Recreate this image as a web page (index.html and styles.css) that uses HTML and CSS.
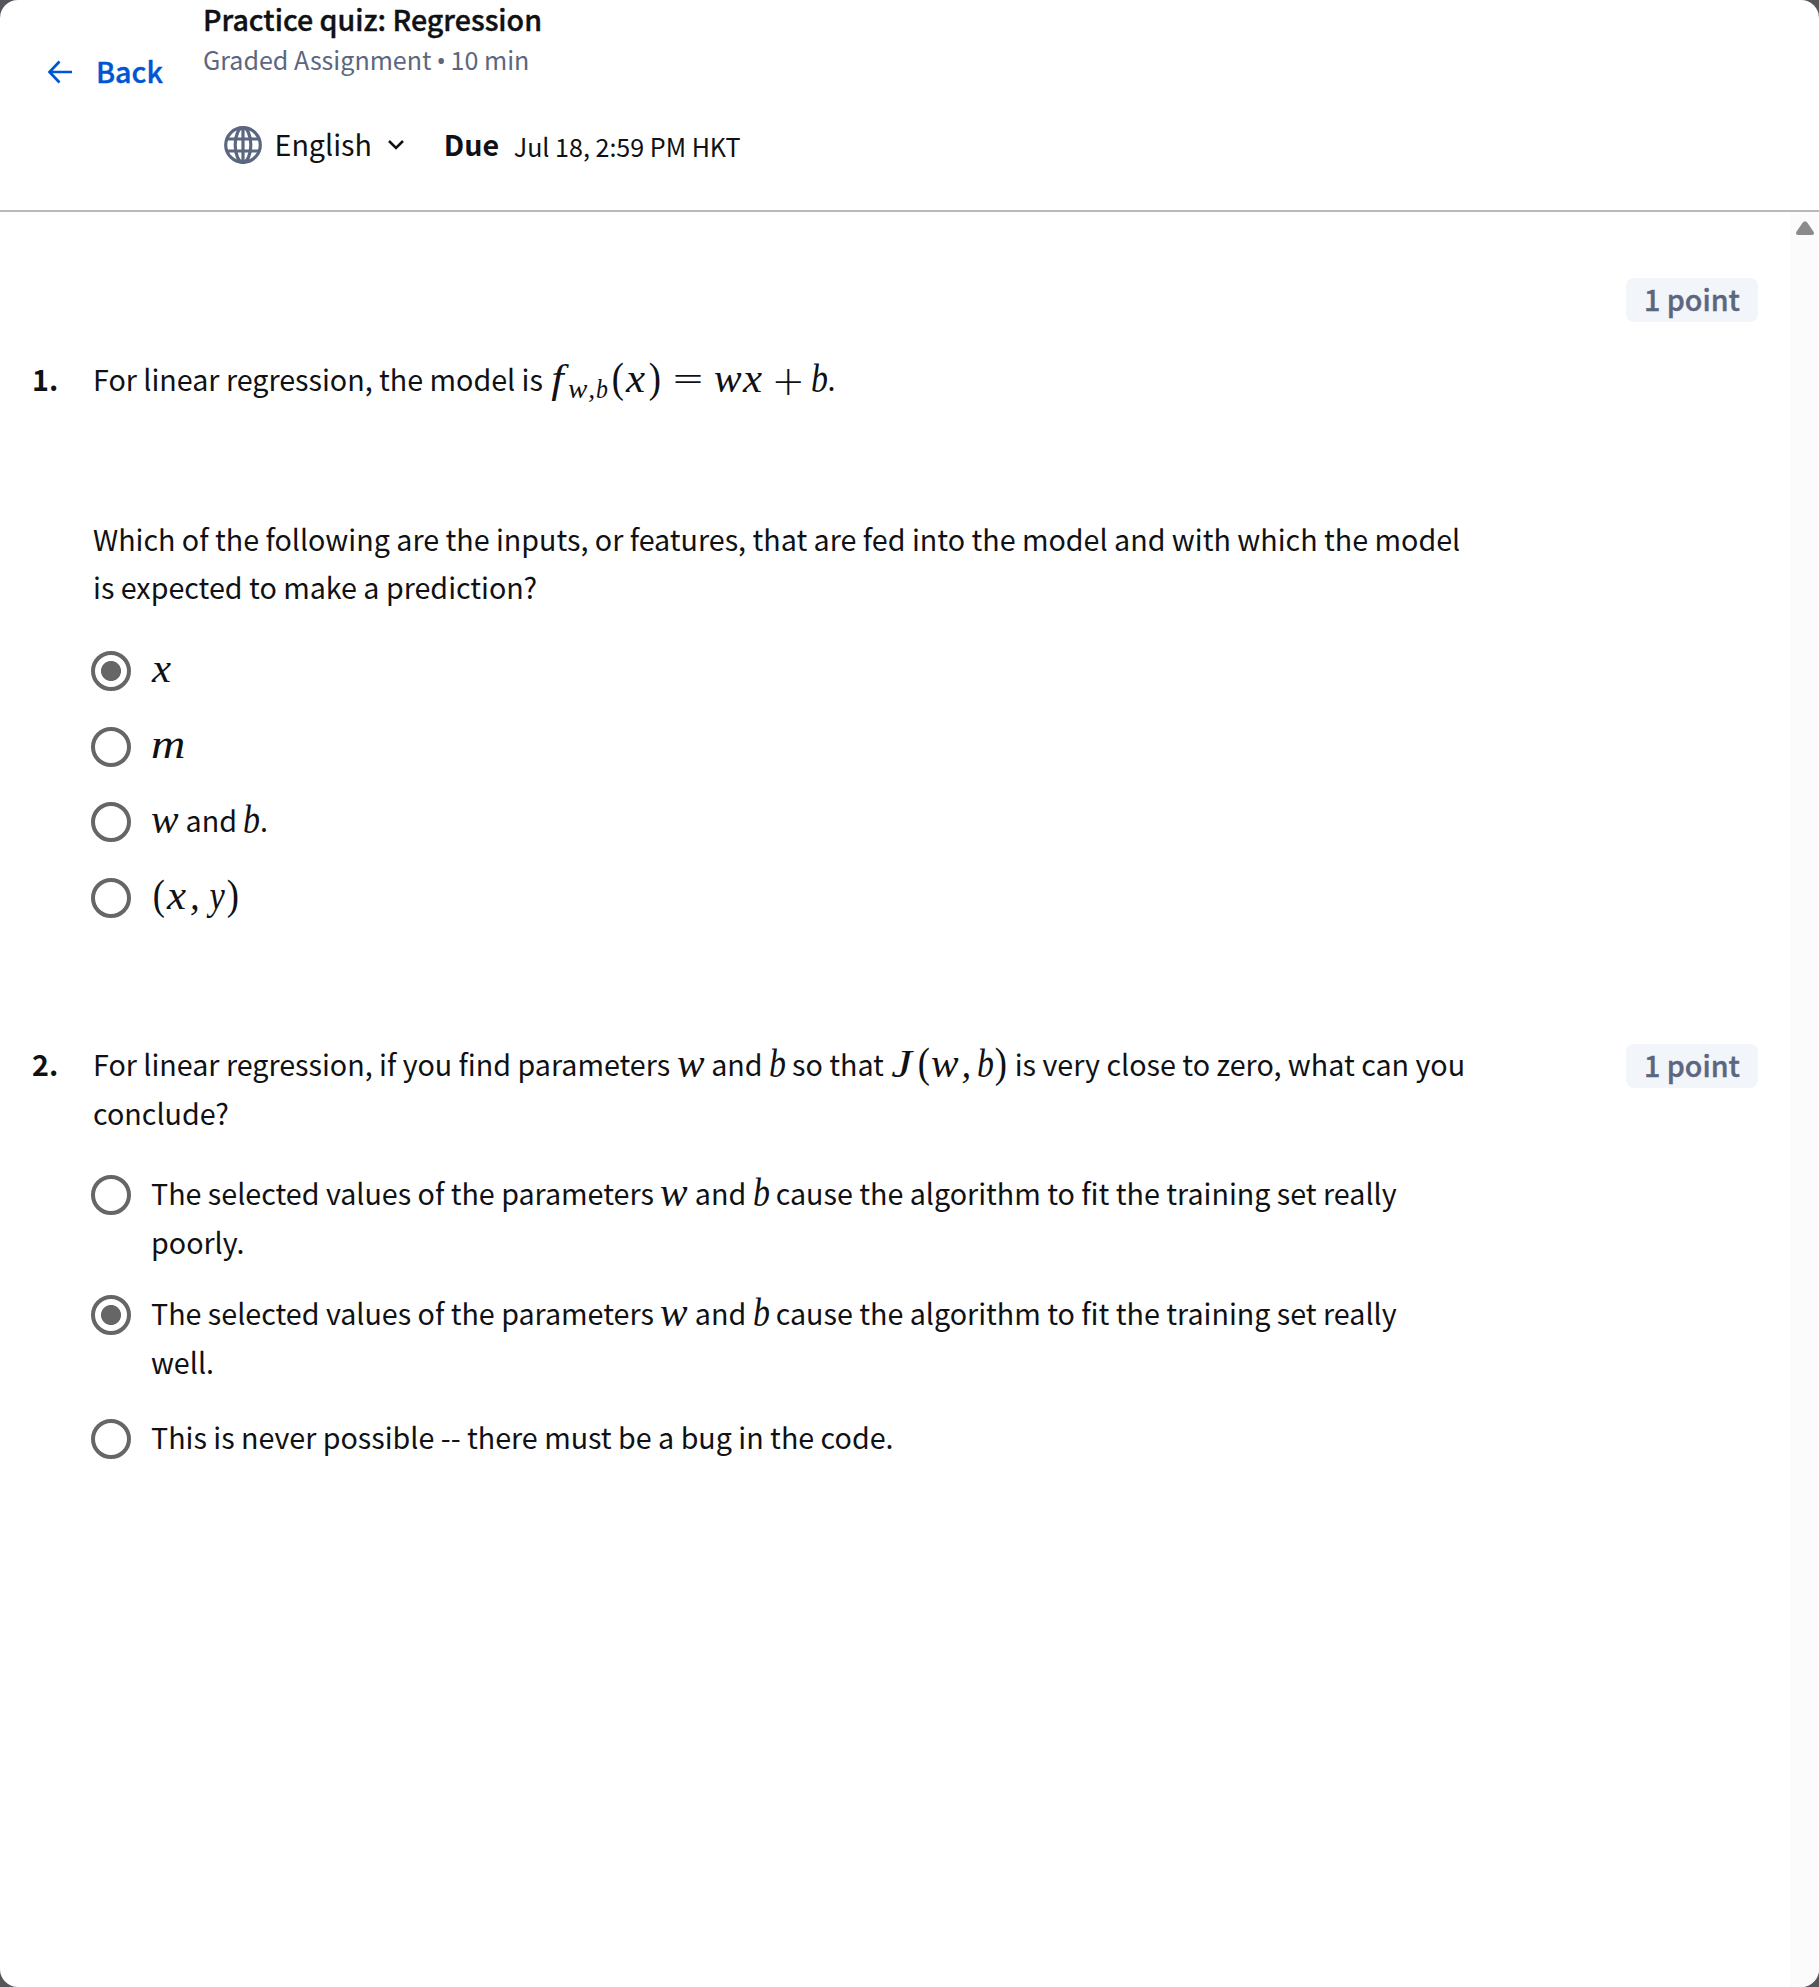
FILE: index.html
```html
<!DOCTYPE html>
<html lang="en">
<head>
<meta charset="utf-8">
<title>Practice quiz: Regression</title>
<link rel="stylesheet" href="styles.css">
</head>
<body>
<div class="window">
  <header class="header">
    <a class="back">
      <svg class="back-icon" width="26" height="24" viewBox="0 0 26 24" fill="none" stroke="currentColor" stroke-width="2.7"><path d="M12.5 1.5L2.5 12l10 10.500M2.500 12H25"/></svg>
      <span class="back-label">Back</span>
    </a>
    <div class="heading">
      <h1 class="title">Practice quiz: Regression</h1>
      <div class="subtitle">Graded Assignment <span class="bullet">•</span> 10 min</div>
      <div class="meta">
        <svg class="globe" width="38" height="38" viewBox="0 0 38 38" fill="none" stroke="currentColor" stroke-width="3.200"><circle cx="19" cy="19" r="17.3"/><ellipse cx="19" cy="19" rx="7.800" ry="17.300"/><path d="M19 2v34M3.500 13h31M3.500 25h31"/></svg>
        <span class="language">English</span>
        <svg class="chevron" width="16" height="10" viewBox="0 0 16 10" fill="none" stroke="currentColor" stroke-width="2.500"><path d="M1 1l7 7 7-7"/></svg>
        <span class="due">Due</span>
        <span class="date">Jul 18, 2:59 PM HKT</span>
      </div>
    </div>
  </header>
  <div class="content">
    <main class="quiz">
      <section class="question first">
        <div class="points">1 point</div>
        <div class="number">1.</div>
        <div class="body">
          <p class="prompt">For linear regression, the model is <span class="math"><i class="g f">f</i><span class="sub"><i class="g w">w</i><i class="g c">,</i><i class="g b">b</i></span><i class="g p">(</i><i class="g x">x</i><i class="g p">)</i><i class="g eq">=</i><i class="g w">w</i><i class="g x">x</i><i class="g plus">+</i><i class="g b">b</i></span>.</p>
          <p class="prompt second">Which of the following are the inputs, or features, that are fed into the model and with which the model<br>is expected to make a prediction?</p>
          <div class="option"><span class="radio on"></span><div><i class="g x">x</i></div></div>
          <div class="option"><span class="radio"></span><div><i class="g m">m</i></div></div>
          <div class="option"><span class="radio"></span><div><i class="g w">w</i> and <i class="g b">b</i>.</div></div>
          <div class="option"><span class="radio"></span><div><i class="g p">(</i><i class="g x">x</i><i class="g c">,</i><i class="g y">y</i><i class="g p">)</i></div></div>
        </div>
      </section>
      <section class="question last">
        <div class="number">2.</div>
        <div class="body">
          <p class="prompt">For linear regression, if you find parameters <i class="g w">w</i> and <i class="g b">b</i> so that <i class="g j">J</i><i class="g p">(</i><i class="g w">w</i><i class="g c">,</i><i class="g b">b</i><i class="g p">)</i> is very close to zero, what can you<br>conclude?</p>
          <div class="option long"><span class="radio"></span><div>The selected values of the parameters <i class="g w">w</i> and <i class="g b">b</i> cause the algorithm to fit the training set really<br>poorly.</div></div>
          <div class="option"><span class="radio on"></span><div>The selected values of the parameters <i class="g w">w</i> and <i class="g b">b</i> cause the algorithm to fit the training set really<br>well.</div></div>
          <div class="option"><span class="radio"></span><div>This is never possible -- there must be a bug in the code.</div></div>
        </div>
        <div class="points">1 point</div>
      </section>
    </main>
    <div class="scrollbar"><svg width="18" height="14" viewBox="0 0 18 14"><path d="M6.600 1.800Q9-1.400 11.400 1.800L17.400 10.500Q19 14 16 14H2Q-1 14 .6 10.500Z" fill="#8b8b8b"/></svg></div>
  </div>
</div>
</body>
</html>
```
FILE: styles.css
```css
* { box-sizing: border-box; }
body {
  margin: 0;
  background: #55555a;
  color: #0f1114;
  font: 400 28.66px/48.5px "Noto Sans CJK SC", "Open Sans", sans-serif;
}
h1, p { margin: 0; }
.window {
  height: 1987px;
  display: flex;
  flex-direction: column;
  background: #fff;
  border-radius: 18px;
  overflow: hidden;
}
.header {
  flex: none;
  height: 212px;
  display: flex;
  border-bottom: 2px solid #b9b9b9;
}
.back {
  width: 203px;
  height: 144px;
  padding-left: 47px;
  display: flex;
  align-items: center;
  gap: 23px;
  color: #0056d2;
  font-weight: 500;
}
.back-label { margin-top: -2px; }
.back-label, .title, .points { -webkit-text-stroke: .4px currentColor; }
.title { font-size: 28.6px; font-weight: 500; line-height: 38px; }
.subtitle { font-size: 25.07px; line-height: 36px; margin-top: 3px; color: #5b6780; }
.bullet { font-family: "Open Sans", sans-serif; font-size: 26px; line-height: 0; margin: 0 -1px; }
.meta {
  display: flex;
  align-items: center;
  height: 48px;
  margin: 44px 0 0 21px;
}
.globe { color: #5b6780; }
.language { margin: -2px 0 0 12.500px; }
.chevron { margin-left: 16.500px; }
.due { font-weight: 700; margin: -1px 0 0 39.500px; }
.date { font-size: 25.07px; margin: 2px 0 0 14.500px; }

.content { flex: 1; display: flex; }
.quiz { flex: 1; padding: 66px 32px 0; }
.scrollbar { width: 29px; padding: 9px 0 0 6px; background: #fbfbfb; line-height: 0; }
.question { display: grid; grid-template-columns: 61px 1400px 1fr; }
.points {
  grid-column: 3;
  justify-self: end;
  width: 132px;
  height: 44px;
  border-radius: 8px;
  background: #f2f5fa;
  color: #5b6780;
  font-weight: 500;
  line-height: 42px;
  text-align: center;
}
.number { grid-column: 1; font-weight: 700; }
.body { white-space: nowrap; }
.first .number, .first .body { margin-top: 33px; }
.first { margin-bottom: 92.600px; }
.last .points { margin-top: 4px; }
.prompt { margin-bottom: 31.700px; }
.second { margin: 111px 0 33.500px; }
.option { display: flex; gap: 20px; margin: 0 0 27.200px -2px; }
.option.long { margin-bottom: 23px; }
.radio {
  flex: none;
  width: 40px;
  height: 40px;
  margin-top: 6px;
  border: 4px solid #666;
  border-radius: 50%;
}
.radio.on { background: radial-gradient(circle, #666 9.6px, transparent 10.400px); }

/* Formula glyphs: each has its own advance width and horizontal stretch. */
.g {
  display: inline-block;
  font: italic 39px/40px "Liberation Serif", serif;
  height: 40px;
  margin: -6px 0;
  transform: translateY(1px) scaleX(var(--stretch, 1));
  transform-origin: 0 50%;
}
.x { width: 22px; text-indent: 1px; --stretch: 1.1; }
.w { width: 28.200px; --stretch: 1.06; }
.b { width: 16.600px; --stretch: .87; }
.m { width: 34px; --stretch: 1.22; }
.y { width: 20px; text-indent: 5px; --stretch: .88; }
.j { width: 26px; text-indent: 1px; --stretch: 1.2; }
.f { width: 19px; text-indent: 2px; --stretch: 1.15; }
.c { width: 17.200px; text-indent: 2px; }
.p { width: 15px; font-style: normal; font-size: 43px; text-indent: 2px; --stretch: .85; }
.eq, .plus { font: 200 40px/40px "DejaVu Sans", sans-serif; }
.eq { width: 51.500px; text-indent: 9px; }
.plus { width: 47px; text-indent: 7.500px; vertical-align: -3px; }
.sub { position: relative; top: 6px; }
.sub .g { font-size: 27.400px; }
.sub .w { width: 19px; }
.sub .c { width: 9px; text-indent: 1px; }
.sub .b { width: 14px; }
```
